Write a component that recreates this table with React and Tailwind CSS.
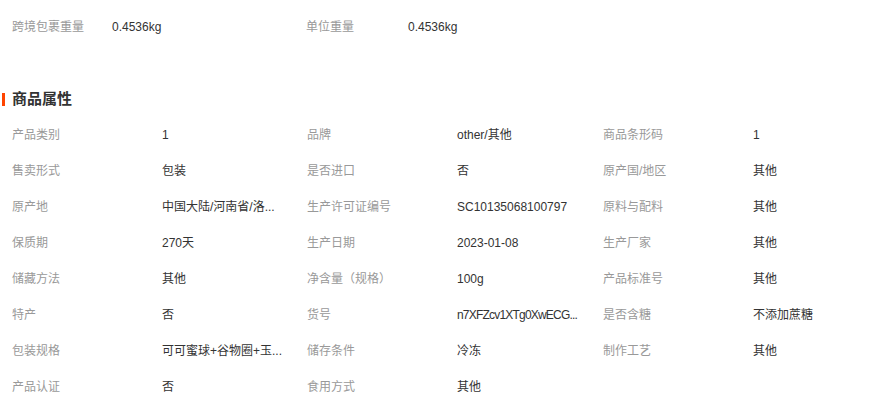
import React from 'react';

const attrs = [
  ['产品类别', '1', '品牌', 'other/其他', '商品条形码', '1'],
  ['售卖形式', '包装', '是否进口', '否', '原产国/地区', '其他'],
  ['原产地', '中国大陆/河南省/洛...', '生产许可证编号', 'SC10135068100797', '原料与配料', '其他'],
  ['保质期', '270天', '生产日期', '2023-01-08', '生产厂家', '其他'],
  ['储藏方法', '其他', '净含量（规格）', '100g', '产品标准号', '其他'],
  ['特产', '否', '货号', 'n7XFZcv1XTg0XwECG...', '是否含糖', '不添加蔗糖'],
  ['包装规格', '可可蜜球+谷物圈+玉...', '储存条件', '冷冻', '制作工艺', '其他'],
  ['产品认证', '否', '食用方式', '其他'],
];

function Cell({ label, value }) {
  if (!label) return <div />;
  const tight = value.startsWith('n7X');
  return (
    <div className="flex items-center h-9">
      <div className="w-[150px] shrink-0 text-[#999]">{label}</div>
      <div className={tight ? 'whitespace-nowrap text-[#333] tracking-[-0.8px]' : 'whitespace-nowrap text-[#333]'}>
        {value}
      </div>
    </div>
  );
}

export default function App() {
  return (
    <div
      className="bg-white w-[873px] h-[397px] overflow-hidden text-[12px] leading-[16px]"
      style={{ fontFamily: '"Liberation Sans", "Noto Sans CJK SC", sans-serif' }}
    >
      <div className="flex items-center h-[52px] pt-[2px] pl-3">
        <div className="flex w-[294px]">
          <span className="w-[100px] text-[#999]">跨境包裹重量</span>
          <span className="text-[#333]">0.4536kg</span>
        </div>
        <div className="flex">
          <span className="w-[102px] text-[#999]">单位重量</span>
          <span className="text-[#333]">0.4536kg</span>
        </div>
      </div>

      <div className="flex items-center h-[14px] mt-[40px] mb-[11px]">
        <div className="w-[3px] h-[13px] bg-[#ff4400] ml-[2px]" />
        <h2 className="ml-[7px] text-[15px] font-bold text-[#333]">商品属性</h2>
      </div>

      <div className="pl-3 grid grid-cols-[295px_296px_1fr]">
        {attrs.map((r, i) => (
          <React.Fragment key={i}>
            <Cell label={r[0]} value={r[1]} />
            <Cell label={r[2]} value={r[3]} />
            <Cell label={r[4]} value={r[5]} />
          </React.Fragment>
        ))}
      </div>
    </div>
  );
}
